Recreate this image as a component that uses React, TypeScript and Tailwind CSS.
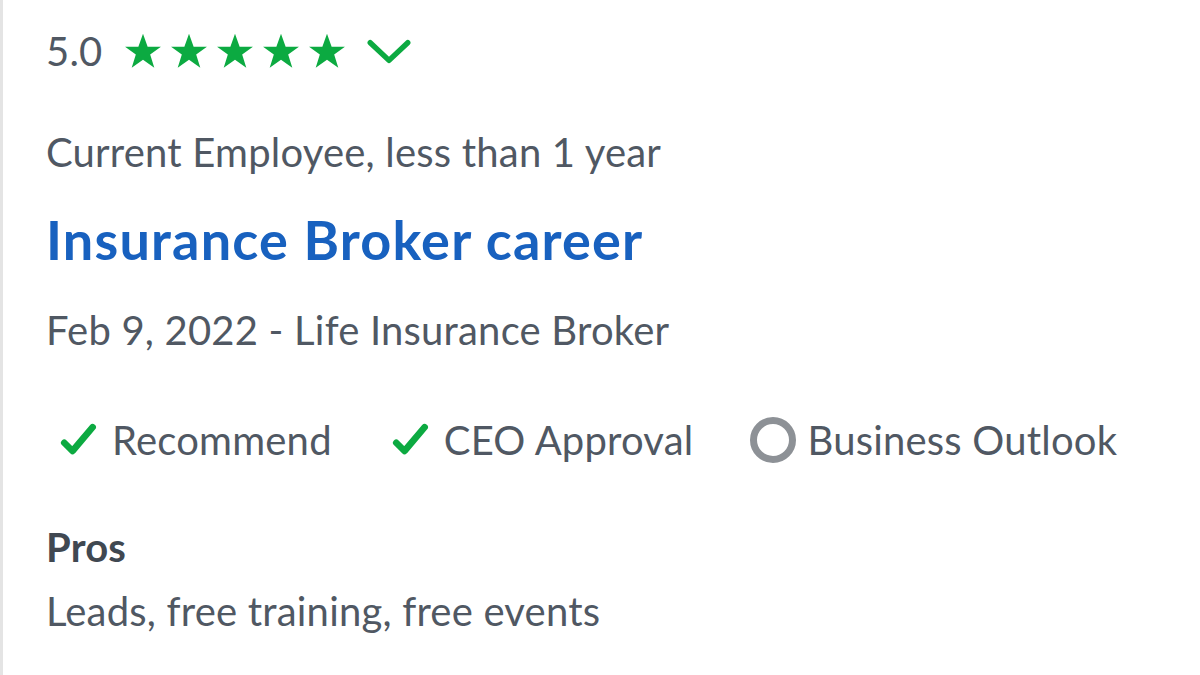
import React from "react";

const Star = () => (
    <svg viewBox="0 0 24 24" className="w-[42px] h-[42px]" fill="#0caa41">
        <path d="M12 2.2l2.65 7.3h7.6l-6.15 4.55 2.35 7.45L12 17 5.55 21.5l2.35-7.45L1.75 9.5h7.6z" />
    </svg>
);

const Check = () => (
    <svg viewBox="0 0 24 24" className="w-[44px] h-[44px]" fill="none" stroke="#0caa41" strokeWidth="3.6" strokeLinecap="round" strokeLinejoin="round">
        <path d="M4.5 13.5l4.5 4.5L20 5" />
    </svg>
);

const Badge = ({ done, label }: { done: boolean; label: string }) => (
    <div className="flex items-center gap-[12px]">
        {done ? (
            <Check />
        ) : (
            <div className="w-[46px] h-[46px] rounded-full border-[7px] border-[#8d9196]" />
        )}
        <span>{label}</span>
    </div>
);

export default function App() {
    return (
        <div className="w-[1200px] h-[675px] bg-white overflow-hidden" style={{ fontFamily: "Lato, 'Noto Sans', sans-serif" }}>
            <div className="h-full border-l-[3px] border-[#e4e4e4] pl-[43px] text-[#505863] text-[40px] tracking-[0.2px]">
                <div className="flex items-center h-[104px] pb-[2px]">
                    <span className="mr-[20px]">5.0</span>
                    <div className="flex gap-[4px]">
                        <Star />
                        <Star />
                        <Star />
                        <Star />
                        <Star />
                    </div>
                    <svg viewBox="0 0 24 24" className="w-[50px] h-[50px] ml-[16px]" fill="none" stroke="#0caa41" strokeWidth="2.6" strokeLinecap="round" strokeLinejoin="round">
                        <path d="M3 8l9 8.5L21 8" />
                    </svg>
                </div>
                <p className="leading-[96px]">Current Employee, less than 1 year</p>
                <h1 className="text-[#1861bf] font-bold text-[54px] tracking-[1.2px] leading-[80px]">Insurance Broker career</h1>
                <p className="leading-[100px]">Feb 9, 2022 - Life Insurance Broker</p>
                <div className="flex items-center gap-[56px] h-[120px] pl-[10px]">
                    <Badge done label="Recommend" />
                    <Badge done label="CEO Approval" />
                    <Badge done={false} label="Business Outlook" />
                </div>
                <h2 className="font-bold text-[#404851] leading-[94px]">Pros</h2>
                <p className="-mt-[13px]">Leads, free training, free events</p>
            </div>
        </div>
    );
}
